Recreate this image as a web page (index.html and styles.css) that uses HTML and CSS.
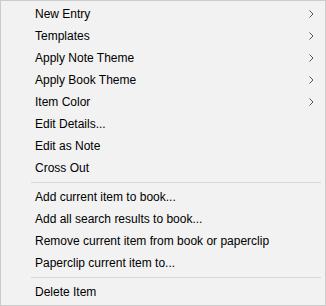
FILE: index.html
```html
<!DOCTYPE html>
<html>
<head>
<meta charset="utf-8">
<link rel="stylesheet" href="styles.css">
</head>
<body>
<div class="menu">
  <div class="item"><span class="label">New Entry</span><svg class="chev" width="5" height="8" viewBox="0 0 5 8"><path d="M0.5 0.5 L4 4 L0.5 7.5" fill="none" stroke="#555" stroke-width="1"/></svg></div>
  <div class="item"><span class="label">Templates</span><svg class="chev" width="5" height="8" viewBox="0 0 5 8"><path d="M0.5 0.5 L4 4 L0.5 7.5" fill="none" stroke="#555" stroke-width="1"/></svg></div>
  <div class="item"><span class="label">Apply Note Theme</span><svg class="chev" width="5" height="8" viewBox="0 0 5 8"><path d="M0.5 0.5 L4 4 L0.5 7.5" fill="none" stroke="#555" stroke-width="1"/></svg></div>
  <div class="item"><span class="label">Apply Book Theme</span><svg class="chev" width="5" height="8" viewBox="0 0 5 8"><path d="M0.5 0.5 L4 4 L0.5 7.5" fill="none" stroke="#555" stroke-width="1"/></svg></div>
  <div class="item"><span class="label">Item Color</span><svg class="chev" width="5" height="8" viewBox="0 0 5 8"><path d="M0.5 0.5 L4 4 L0.5 7.5" fill="none" stroke="#555" stroke-width="1"/></svg></div>
  <div class="item"><span class="label">Edit Details...</span></div>
  <div class="item"><span class="label">Edit as Note</span></div>
  <div class="item"><span class="label">Cross Out</span></div>
  <div class="sep"></div>
  <div class="item"><span class="label">Add current item to book...</span></div>
  <div class="item"><span class="label">Add all search results to book...</span></div>
  <div class="item"><span class="label">Remove current item from book or paperclip</span></div>
  <div class="item"><span class="label">Paperclip current item to...</span></div>
  <div class="sep"></div>
  <div class="item"><span class="label">Delete Item</span></div>
</div>
</body>
</html>
```
FILE: styles.css
```css
html, body {
  margin: 0;
  padding: 0;
  background: #f2f2f2;
}
.menu {
  box-sizing: border-box;
  width: 326px;
  height: 306px;
  background: #f2f2f2;
  border: 1px solid #cccccc;
  padding: 2px 0;
  font-family: "Liberation Sans", Arial, sans-serif;
  font-size: 12px;
  color: #000;
}
.item {
  height: 22px;
  display: flex;
  align-items: center;
  padding-left: 34px;
  padding-right: 11px;
}
.label {
  flex: 1;
  white-space: nowrap;
}
.chev {
  display: block;
}
.sep {
  height: 1px;
  background: #d7d7d7;
  margin: 3px 4px 3px 30px;
}
```
